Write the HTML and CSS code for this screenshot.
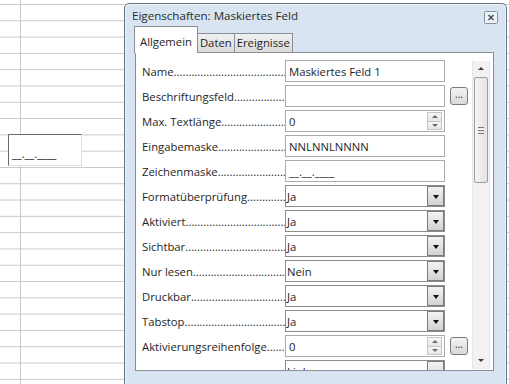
FILE: index.html
```html
<!DOCTYPE html>
<html lang="de">
<head>
    <meta charset="UTF-8">
    <meta name="viewport" content="width=device-width, initial-scale=1.0">
    <title>Eigenschaften: Maskiertes Feld</title>
    <link rel="stylesheet" href="styles.css">
</head>
<body>
    <div class="sheet">
        <!-- Formularfeld auf der Tabelle -->
        <div class="masked-cell">__.__.____</div>

        <!-- Eigenschaften-Dialog -->
        <div class="dialog">
            <div class="title-bar">
                <span class="title">Eigenschaften: Maskiertes Feld</span>
                <span class="close-btn">
                    <svg width="14" height="13" viewBox="0 0 14 13">
                        <rect x="0.5" y="0.5" width="13" height="12" rx="1" fill="#eef2f7" stroke="#8592a5"/>
                        <path d="M4.5 4 L9.5 9 M9.5 4 L4.5 9" stroke="#4a5566" stroke-width="1.6"/>
                    </svg>
                </span>
            </div>

            <div class="tabs">
                <span class="tab active">Allgemein</span>
                <span class="tab">Daten</span>
                <span class="tab">Ereignisse</span>
            </div>

            <div class="panel">
                <div class="rows">
                    <div class="row">
                        <span class="label">Name</span>
                        <div class="field"><span class="value">Maskiertes Feld 1</span></div>
                    </div>
                    <div class="row">
                        <span class="label">Beschriftungsfeld</span>
                        <div class="field"><span class="value"></span></div>
                        <span class="dots-btn">...</span>
                    </div>
                    <div class="row">
                        <span class="label">Max. Textlänge</span>
                        <div class="field spin">
                            <span class="value">0</span>
                            <span class="spin-btns"><span class="spin-up"></span><span class="spin-down"></span></span>
                        </div>
                    </div>
                    <div class="row">
                        <span class="label">Eingabemaske</span>
                        <div class="field"><span class="value">NNLNNLNNNN</span></div>
                    </div>
                    <div class="row">
                        <span class="label">Zeichenmaske</span>
                        <div class="field"><span class="value">__.__.____</span></div>
                    </div>
                    <div class="row">
                        <span class="label">Formatüberprüfung</span>
                        <div class="field select"><span class="value">Ja</span><span class="drop-btn"></span></div>
                    </div>
                    <div class="row">
                        <span class="label">Aktiviert</span>
                        <div class="field select"><span class="value">Ja</span><span class="drop-btn"></span></div>
                    </div>
                    <div class="row">
                        <span class="label">Sichtbar</span>
                        <div class="field select"><span class="value">Ja</span><span class="drop-btn"></span></div>
                    </div>
                    <div class="row">
                        <span class="label">Nur lesen</span>
                        <div class="field select"><span class="value">Nein</span><span class="drop-btn"></span></div>
                    </div>
                    <div class="row">
                        <span class="label">Druckbar</span>
                        <div class="field select"><span class="value">Ja</span><span class="drop-btn"></span></div>
                    </div>
                    <div class="row">
                        <span class="label">Tabstop</span>
                        <div class="field select"><span class="value">Ja</span><span class="drop-btn"></span></div>
                    </div>
                    <div class="row">
                        <span class="label">Aktivierungsreihenfolge</span>
                        <div class="field spin">
                            <span class="value">0</span>
                            <span class="spin-btns"><span class="spin-up"></span><span class="spin-down"></span></span>
                        </div>
                        <span class="dots-btn">...</span>
                    </div>
                    <div class="row">
                        <span class="label blank"></span>
                        <div class="field select"><span class="value">Links</span><span class="drop-btn"></span></div>
                    </div>
                </div>

                <!-- Bildlaufleiste -->
                <div class="scrollbar">
                    <span class="arrow-up"></span>
                    <span class="thumb"><span class="grip"></span></span>
                    <span class="track"></span>
                    <span class="arrow-down"></span>
                </div>
            </div>
        </div>
    </div>
</body>
</html>
```

FILE: styles.css
```css
body {
    margin: 0;
    font-family: 'Open Sans', 'DejaVu Sans', sans-serif;
    font-size: 11.3px;
    color: #1e1e1e;
}
.sheet {
    position: relative;
    width: 509px;
    height: 384px;
    overflow: hidden;
    background-color: #fff;
    background-image:
        linear-gradient(to right, transparent 20px, #c8c8c8 20px, #c8c8c8 21px, transparent 21px),
        linear-gradient(to bottom, #c8c8c8 1px, transparent 1px);
    background-size: 100% 100%, 100% 16.3px;
    background-position: 0 0, 0 4px;
    background-repeat: no-repeat, repeat-y;
}
.masked-cell {
    position: absolute;
    left: 8px;
    top: 134px;
    width: 74px;
    height: 32px;
    box-sizing: border-box;
    border: 1px solid #e0e0e0;
    border-top-color: #6a6a6a;
    border-left-color: #6a6a6a;
    background: #fff;
    padding: 12px 0 0 3px;
    font-size: 11px;
    line-height: 14px;
    color: #111;
}

/* Dialog */
.dialog {
    position: absolute;
    left: 124px;
    top: 3px;
    width: 383px;
    height: 395px;
    box-sizing: border-box;
    border: 1px solid #66748a;
    border-radius: 5px 5px 0 0;
    background: #d8e4f2;
    box-shadow: inset 0 0 0 1px #eef3fa;
}
.title-bar {
    height: 22px;
    display: flex;
    align-items: center;
    justify-content: space-between;
    padding: 0 8px 0 7px;
}
.title {
    color: #2a2a2a;
    font-size: 11.6px;
}
.close-btn {
    display: flex;
    margin-top: 4px;
}
.tabs {
    display: flex;
    align-items: flex-end;
    height: 26px;
    padding-left: 9px;
}
.tab {
    height: 18px;
    line-height: 18px;
    padding: 0 2px;
    border: 1px solid #8a8e96;
    border-bottom: none;
    background: linear-gradient(#f0f0f0, #dcdcdc);
    margin-left: -1px;
}
.tab.active {
    height: 26px;
    line-height: 30px;
    padding: 0 5px 0 5px;
    background: #fff;
    position: relative;
    z-index: 1;
    margin-bottom: -1px;
    margin-left: 0;
}
.panel {
    margin-left: 10px;
    width: 359px;
    height: 319px;
    box-sizing: border-box;
    border: 1px solid #8a8e96;
    background: #fff;
    display: flex;
    overflow: hidden;
    padding: 7px 3px 0 6px;
}

/* Eigenschaftszeilen */
.rows {
    width: 332px;
}
.row {
    display: flex;
    align-items: center;
    height: 22px;
    margin-bottom: 3px;
}
.label {
    width: 143px;
    flex-shrink: 0;
    overflow: hidden;
    white-space: nowrap;
    color: #1e1e1e;
}
.label::after {
    content: "..............................................................";
}
.label.blank::after {
    content: "";
}
.field {
    width: 160px;
    height: 22px;
    box-sizing: border-box;
    border: 1px solid #a9abb0;
    display: flex;
    align-items: center;
    background: #fff;
}
.field.select {
    border-color: #8c8c8c;
}
.value {
    flex: 1;
    padding-left: 3px;
    white-space: nowrap;
}
.field.select .value {
    padding-left: 1px;
}
.drop-btn {
    width: 17px;
    height: 20px;
    box-sizing: border-box;
    border: 1px solid #7c7c7c;
    background: linear-gradient(#f3f3f3, #d2d2d2);
    position: relative;
}
.drop-btn::after {
    content: "";
    position: absolute;
    left: 5px;
    top: 8px;
    border-left: 3.5px solid transparent;
    border-right: 3.5px solid transparent;
    border-top: 4px solid #111;
}
.spin-btns {
    width: 15px;
    height: 18px;
    margin-right: 2px;
    display: flex;
    flex-direction: column;
}
.spin-up, .spin-down {
    flex: 1;
    border: 1px solid #c3c7cd;
    background: linear-gradient(#f7f7f7, #e6e6e6);
    position: relative;
}
.spin-down {
    border-top: none;
}
.spin-up::after, .spin-down::after {
    content: "";
    position: absolute;
    left: 4px;
    top: 2px;
    border-left: 3px solid transparent;
    border-right: 3px solid transparent;
}
.spin-up::after {
    border-bottom: 3px solid #6c6c6c;
}
.spin-down::after {
    border-top: 3px solid #6c6c6c;
}
.dots-btn {
    width: 18px;
    height: 18px;
    margin-left: 5px;
    box-sizing: border-box;
    border: 1px solid #7a7a7a;
    border-radius: 3px;
    background: linear-gradient(#f4f4f4, #d9d9d9);
    font-size: 10px;
    line-height: 12px;
    text-align: center;
    color: #222;
}

/* Bildlaufleiste */
.scrollbar {
    width: 16px;
    height: 308px;
    margin-left: 2px;
    margin-top: 1px;
    background: #f2f2f2;
    border-left: 1px solid #e6e6e6;
    border-right: 1px solid #e6e6e6;
    display: flex;
    flex-direction: column;
    align-items: center;
}
.arrow-up, .arrow-down {
    height: 16px;
    width: 16px;
    position: relative;
}
.arrow-up::after, .arrow-down::after {
    content: "";
    position: absolute;
    left: 5px;
    top: 6px;
    border-left: 3px solid transparent;
    border-right: 3px solid transparent;
}
.arrow-up::after {
    border-bottom: 3px solid #3c3c3c;
}
.arrow-down::after {
    border-top: 3px solid #3c3c3c;
}
.thumb {
    width: 14px;
    height: 106px;
    box-sizing: border-box;
    border: 1px solid #9a9fa6;
    border-radius: 2px;
    background: linear-gradient(to right, #f4f4f4, #e3e3e3);
    display: flex;
    align-items: center;
    justify-content: center;
}
.grip {
    width: 6px;
    height: 5px;
    border-top: 1px solid #777;
    border-bottom: 1px solid #777;
    background: linear-gradient(#fff 1px, #777 1px, #777 2px, transparent 2px);
    background-position: 0 1.5px;
    background-repeat: no-repeat;
}
.track {
    flex: 1;
}
```
